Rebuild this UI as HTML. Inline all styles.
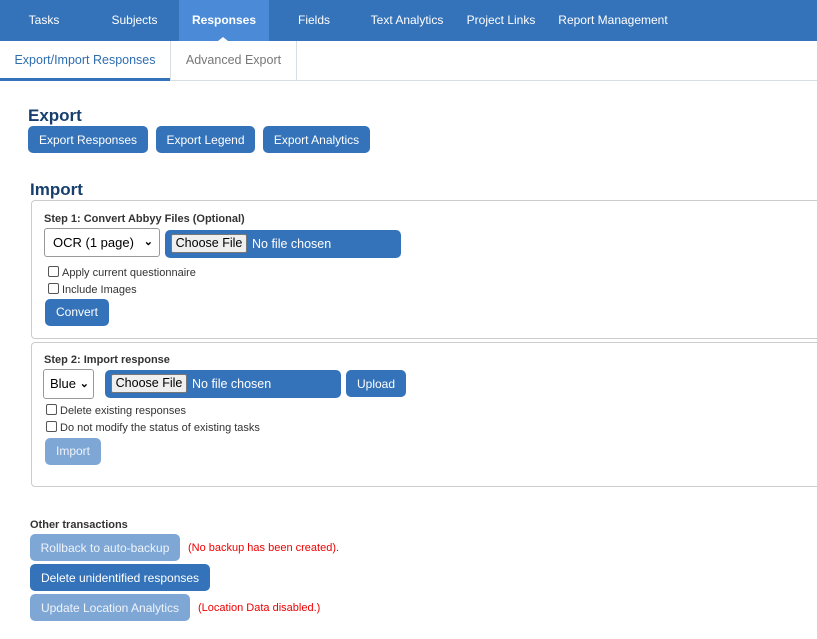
<!DOCTYPE html><html><head><style>
*{box-sizing:border-box;margin:0;padding:0}
body{width:817px;height:639px;overflow:hidden;background:#fff;font-family:"Liberation Sans",Arial,sans-serif;position:relative}
.a{position:absolute}
.nav{left:0;top:0;width:817px;height:41px;background:#3472b9}
.ni{top:0;height:41px;line-height:41px;color:#fff;font-size:12px;text-align:center}
.btn{position:absolute;background:#3472b9;color:#fff;font-size:12px;border-radius:5px;text-align:center}
.dis{background:#7fa7d5;color:#eef3fa}
.box{position:absolute;border:1px solid #ccc;border-radius:4px;left:31px;width:800px}
.lbl{font-size:11px;font-weight:bold;color:#333}
.sel{position:absolute;border:1px solid #999;border-radius:3px;background:#fff;font-size:13px;color:#000;padding-left:8px}
.file{position:absolute;background:#3472b9;border-radius:5px;color:#fff;font-size:12.5px}
.cf{position:absolute;background:#efefef;border:1px solid #777;border-radius:2px;color:#000;font-size:12.5px;text-align:center}
.cb{position:absolute;font-size:11px;color:#333}
.cb i{display:inline-block;width:11px;height:11px;border:1px solid #555;border-radius:2px;vertical-align:-1px;margin-right:3px}
.red{position:absolute;color:#e00;font-size:11px}
</style></head><body>
<div class="a nav"></div>
<div class="a ni" style="left:0;width:88px">Tasks</div>
<div class="a ni" style="left:90px;width:89px">Subjects</div>
<div class="a ni" style="left:179px;width:90px;background:#4a8ad6;font-weight:bold">Responses</div>
<div class="a" style="left:218px;top:37px;width:0;height:0;border-left:5px solid transparent;border-right:5px solid transparent;border-bottom:4px solid #fff"></div>
<div class="a ni" style="left:280px;width:68px">Fields</div>
<div class="a ni" style="left:362px;width:90px">Text Analytics</div>
<div class="a ni" style="left:458px;width:86px">Project Links</div>
<div class="a ni" style="left:552px;width:122px">Report Management</div>
<div class="a" style="left:0;top:80px;width:817px;height:1px;background:#d8dde3"></div>
<div class="a" style="left:0;top:41px;width:170px;height:40px;line-height:39px;text-align:center;font-size:12.5px;color:#2f6db0;border-bottom:3px solid #3472b9">Export/Import Responses</div>
<div class="a" style="left:170px;top:41px;width:127px;height:40px;line-height:39px;text-align:center;font-size:12.5px;color:#777;border-left:1px solid #d8dde3;border-right:1px solid #d8dde3">Advanced Export</div>
<div class="a" style="left:28px;top:106px;font-size:17px;font-weight:bold;color:#173f6e">Export</div>
<div class="btn" style="left:28px;top:126px;width:120px;height:27px;line-height:28px">Export Responses</div>
<div class="btn" style="left:156px;top:126px;width:99px;height:27px;line-height:28px">Export Legend</div>
<div class="btn" style="left:263px;top:126px;width:107px;height:27px;line-height:28px">Export Analytics</div>
<div class="a" style="left:30px;top:180px;font-size:17px;font-weight:bold;color:#173f6e">Import</div>
<div class="box" style="top:200px;height:139px"></div>
<div class="a lbl" style="left:44px;top:213px">Step 1: Convert Abbyy Files (Optional)</div>
<div class="sel" style="left:44px;top:228px;width:116px;height:29px;line-height:27px">OCR (1 page)<span style="position:absolute;right:6px;font-size:11px;font-weight:bold">&#8964;</span></div>
<div class="file" style="left:165px;top:230px;width:236px;height:28px;line-height:28px"><span style="position:absolute;left:87px">No file chosen</span></div>
<div class="cf" style="left:171px;top:234px;width:76px;height:19px;line-height:17px">Choose File</div>
<div class="cb" style="left:48px;top:266px"><i></i>Apply current questionnaire</div>
<div class="cb" style="left:48px;top:283px"><i></i>Include Images</div>
<div class="btn" style="left:45px;top:299px;width:64px;height:27px;line-height:27px">Convert</div>
<div class="box" style="top:342px;height:145px"></div>
<div class="a lbl" style="left:44px;top:354px">Step 2: Import response</div>
<div class="sel" style="left:43px;top:369px;width:51px;height:30px;line-height:28px;padding-left:6px">Blue<span style="position:absolute;right:4px;font-size:11px;font-weight:bold">&#8964;</span></div>
<div class="file" style="left:105px;top:370px;width:236px;height:28px;line-height:28px"><span style="position:absolute;left:87px">No file chosen</span></div>
<div class="cf" style="left:111px;top:374px;width:76px;height:19px;line-height:17px">Choose File</div>
<div class="btn" style="left:346px;top:370px;width:60px;height:27px;line-height:28px">Upload</div>
<div class="cb" style="left:46px;top:404px"><i></i>Delete existing responses</div>
<div class="cb" style="left:46px;top:421px"><i></i>Do not modify the status of existing tasks</div>
<div class="btn dis" style="left:45px;top:438px;width:56px;height:27px;line-height:27px">Import</div>
<div class="a lbl" style="left:30px;top:519px">Other transactions</div>
<div class="btn dis" style="left:30px;top:534px;width:150px;height:27px;line-height:28px">Rollback to auto-backup</div>
<div class="red" style="left:188px;top:542px">(No backup has been created).</div>
<div class="btn" style="left:30px;top:564px;width:180px;height:27px;line-height:28px">Delete unidentified responses</div>
<div class="btn dis" style="left:30px;top:594px;width:160px;height:27px;line-height:28px">Update Location Analytics</div>
<div class="red" style="left:198px;top:602px">(Location Data disabled.)</div>
</body></html>
